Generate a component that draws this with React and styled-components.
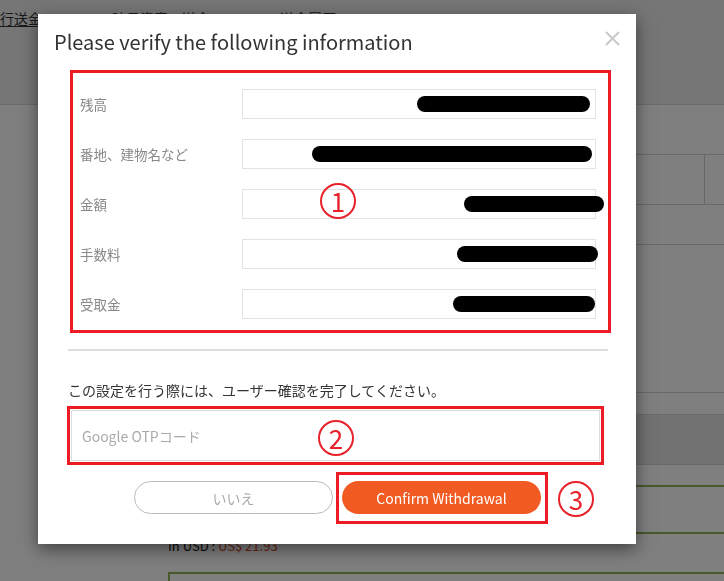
import React from 'react'
import styled, { createGlobalStyle } from 'styled-components'

const GlobalStyle = createGlobalStyle`
    html, body {
        margin: 0;
        padding: 0;
        background: #ffffff;
        font-family: "Noto Sans CJK JP", "Noto Sans", sans-serif;
    }
`

const rows = [
    { label: '残高', bar: 173, shift: 5 },
    { label: '番地、建物名など', bar: 280, shift: 3 },
    { label: '金額', bar: 140, shift: -9 },
    { label: '手数料', bar: 141, shift: -3 },
    { label: '受取金', bar: 142, shift: 0 },
]

function App() {
    return (
        <>
            <GlobalStyle />
            <Page>
                <TopBar>
                    <TabRow>
                        <Tab active>行送金</Tab>
                        <Tab>暗号資産の送金</Tab>
                        <Tab>送金履歴</Tab>
                    </TabRow>
                </TopBar>
                <Content>
                    <Block h={49} />
                    <TableHead>
                        <HeadCell />
                        <HeadCell narrow />
                    </TableHead>
                    <Block h={39} />
                    <Block h={147} />
                    <Block h={21} />
                    <Block h={49} dark />
                    <Spacer h={20} />
                    <GreenBox h={45} />
                    <UsdLine>
                        In USD : <UsdValue>US$ 21.93</UsdValue>
                    </UsdLine>
                    <GreenBox h={20} open />
                </Content>
            </Page>

            <Overlay />

            <Modal>
                <Header>
                    <Title>Please verify the following information</Title>
                    <CloseButton aria-label="close">
                        <svg width="15" height="15" viewBox="0 0 15 15">
                            <path
                                d="M1 1 L14 14 M14 1 L1 14"
                                stroke="#c9c9c9"
                                strokeWidth="2"
                                fill="none"
                            />
                        </svg>
                    </CloseButton>
                </Header>

                <InfoBox>
                    {rows.map((row) => (
                        <InfoRow key={row.label}>
                            <Label>{row.label}</Label>
                            <ValueBox>
                                <Redact
                                    style={{
                                        width: row.bar,
                                        marginRight: row.shift,
                                    }}
                                />
                            </ValueBox>
                        </InfoRow>
                    ))}
                    <Marker top={110} left={247}>
                        1
                    </Marker>
                </InfoBox>

                <Divider />

                <Notice>この設定を行う際には、ユーザー確認を完了してください。</Notice>

                <OtpBox>
                    <OtpInput placeholder="Google OTPコード" />
                    <Marker top={11} left={248}>
                        2
                    </Marker>
                </OtpBox>

                <ButtonRow>
                    <GhostButton>いいえ</GhostButton>
                    <ConfirmFrame>
                        <ConfirmButton>Confirm Withdrawal</ConfirmButton>
                    </ConfirmFrame>
                    <Circle>3</Circle>
                </ButtonRow>
            </Modal>
        </>
    )
}

export default App

const Page = styled.div`
    min-height: 581px;
    background: #ffffff;
    overflow: hidden;
`

const TopBar = styled.div`
    height: 104px;
    background: #ededed;
    border-bottom: 1px solid #d6d6d6;
`

const TabRow = styled.div`
    display: flex;
    align-items: flex-start;
    gap: 70px;
    padding-top: 11px;
`

const Tab = styled.div`
    font-size: 14px;
    line-height: 15px;
    color: #333333;
    white-space: nowrap;
    border-bottom: ${(props) => (props.active ? '1px solid #333333' : 'none')};
`

const Content = styled.div`
    margin-left: 168px;
`

const Block = styled.div`
    height: ${(props) => props.h}px;
    border-bottom: 1px solid #d4d4d4;
    background: ${(props) => (props.dark ? '#e4e4e4' : 'transparent')};
`

const TableHead = styled.div`
    display: flex;
    height: 49px;
    border-bottom: 1px solid #d4d4d4;
`

const HeadCell = styled.div`
    flex: ${(props) => (props.narrow ? '0 0 19px' : '1')};
    border-left: ${(props) => (props.narrow ? '1px solid #cfcfcf' : 'none')};
`

const Spacer = styled.div`
    height: ${(props) => props.h}px;
`

const GreenBox = styled.div`
    height: ${(props) => props.h}px;
    border: 2px solid #90b356;
    border-right: none;
    border-bottom: ${(props) => (props.open ? 'none' : '2px solid #90b356')};
`

const UsdLine = styled.div`
    padding: 2px 0 0 0;
    height: 36px;
    font-size: 13px;
    line-height: 19px;
    color: #111111;
`

const UsdValue = styled.span`
    color: #d84a2a;
`

const Overlay = styled.div`
    position: fixed;
    inset: 0;
    background: rgba(0, 0, 0, 0.5);
`

const Modal = styled.div`
    position: absolute;
    left: 38px;
    top: 14px;
    width: 598px;
    background: #ffffff;
    box-shadow: 0 5px 16px rgba(0, 0, 0, 0.5);
    padding-bottom: 20px;
`

const Header = styled.div`
    display: flex;
    align-items: flex-start;
    justify-content: space-between;
    padding: 14px 16px 0 16px;
    height: 28px;
`

const Title = styled.h2`
    margin: 0;
    font-size: 20px;
    line-height: 28px;
    font-weight: 400;
    color: #333333;
`

const CloseButton = styled.button`
    border: none;
    background: none;
    padding: 0;
    margin-top: 3px;
    width: 15px;
    height: 15px;
    display: flex;
`

const InfoBox = styled.div`
    position: relative;
    margin: 14px 25px 0 32px;
    border: 3px solid #ed1c24;
    padding: 16px 12px 11px 7px;
    display: flex;
    flex-direction: column;
    gap: 20px;
`

const InfoRow = styled.div`
    display: flex;
    align-items: center;
`

const Label = styled.div`
    flex: 0 0 162px;
    font-size: 13.5px;
    color: #888888;
`

const ValueBox = styled.div`
    flex: 1;
    height: 28px;
    border: 1px solid #dfe3e6;
    display: flex;
    align-items: center;
    justify-content: flex-end;
`

const Redact = styled.span`
    height: 16px;
    border-radius: 8px;
    background: #000000;
`

const Marker = styled.span`
    position: absolute;
    top: ${(props) => props.top}px;
    left: ${(props) => props.left}px;
    width: 32px;
    height: 32px;
    border: 2px solid #e8212b;
    border-radius: 50%;
    display: flex;
    align-items: center;
    justify-content: center;
    font-size: 26px;
    line-height: 1;
    color: #e8212b;
`

const Circle = styled(Marker)`
    position: static;
    margin: 9px 0 0 7px;
`

const Divider = styled.div`
    height: 2px;
    background: #dddddd;
    margin: 16px 28px 0 30px;
`

const Notice = styled.p`
    margin: 29px 0 0 30px;
    font-size: 14px;
    line-height: 20px;
    color: #333333;
`

const OtpBox = styled.div`
    position: relative;
    margin: 6px 32px 0 29px;
    border: 3px solid #ed1c24;
    display: flex;
`

const OtpInput = styled.input`
    flex: 1;
    height: 51px;
    box-sizing: border-box;
    border: 1px solid #dddddd;
    margin: 1px;
    padding: 0 10px;
    font-family: inherit;
    font-size: 14px;
    color: #333333;
    outline: none;

    &::placeholder {
        color: #aaaaaa;
    }
`

const ButtonRow = styled.div`
    display: flex;
    align-items: flex-start;
    gap: 3px;
    margin-top: 7px;
    padding-left: 96px;
`

const PillButton = styled.button`
    width: 199px;
    height: 33px;
    border-radius: 17px;
    font-family: inherit;
    font-size: 14px;
    cursor: pointer;
`

const GhostButton = styled(PillButton)`
    margin-top: 9px;
    background: #ffffff;
    border: 1px solid #bbbbbb;
    color: #aaaaaa;
`

const ConfirmFrame = styled.div`
    border: 3px solid #ed1c24;
    padding: 6px 4px 7px 3px;
    display: flex;
`

const ConfirmButton = styled(PillButton)`
    border: none;
    background: #f15a22;
    color: #ffffff;
`
